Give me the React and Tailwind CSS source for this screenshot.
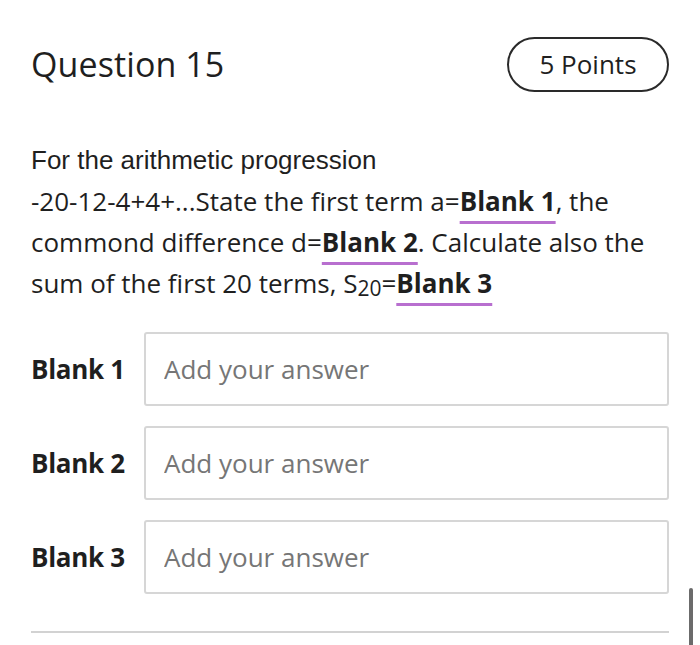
const BLANKS = ['Blank 1', 'Blank 2', 'Blank 3']

function BlankRef({ children }) {
  return (
    <span className="font-bold underline decoration-[#b86fcf] decoration-[3px] underline-offset-[10px]">
      {children}
    </span>
  )
}

export default function App() {
  return (
    <div className="relative w-[700px] h-[645px] overflow-hidden bg-white text-[#1f1f1f] font-['Open_Sans',sans-serif]">
      <div className="px-[31px] pt-[37px]">
        {/* Header */}
        <div className="flex items-center justify-between">
          <h1 className="text-[34px] font-medium tracking-[0.1px]">Question 15</h1>
          <span className="flex items-center justify-center w-[162px] h-[55px] rounded-full border-2 border-[#2a2a2a] text-[26px]">
            5 Points
          </span>
        </div>

        {/* Question body */}
        <div className="mt-[48px] text-[26px] leading-[41px]">
          <p className="font-['Liberation_Sans',sans-serif] text-[26px]">For the arithmetic progression</p>
          <p>
            -20-12-4+4+...State the first term a=<BlankRef>Blank 1</BlankRef>, the commond difference d=
            <BlankRef>Blank 2</BlankRef>. Calculate also the sum of the first 20 terms, S
            <sub className="text-[21px] relative top-[3px] align-baseline">20</sub>=<BlankRef>Blank 3</BlankRef>
          </p>
        </div>

        {/* Answers */}
        <div className="mt-[28px] flex flex-col gap-[20px]">
          {BLANKS.map((b) => (
            <div key={b} className="flex items-center gap-[20px]">
              <span className="w-[93px] shrink-0 text-[26px] font-bold tracking-[-0.3px] whitespace-nowrap">{b}</span>
              <input
                className="flex-1 h-[74px] rounded-[3px] border-2 border-[#d6d6d6] px-[18px] text-[26px] placeholder:text-[#767676] outline-none"
                placeholder="Add your answer"
              />
            </div>
          ))}
        </div>

        <div className="mt-[37px] h-[2px] bg-[#d2d2d2]" />
      </div>

      {/* scrollbar */}
      <div className="absolute right-[7px] top-[588px] w-[4px] h-[60px] rounded-full bg-[#6b6b6b]" />
    </div>
  )
}
